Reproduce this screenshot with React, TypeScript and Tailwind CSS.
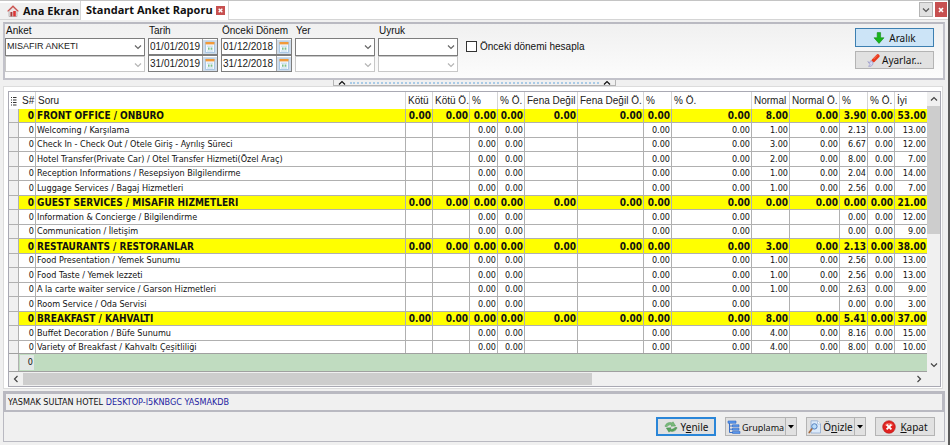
import { useState } from "react";
import type { ReactNode } from "react";
import clsx from "clsx";

type Column = { label: string; width: string };
type Row = { title: string; group?: boolean; values: string[] };

const columns: Column[] = [
  { label: "Kötü", width: "w-[27px]" },
  { label: "Kötü Ö.", width: "w-[37px]" },
  { label: "%", width: "w-[28px]" },
  { label: "% Ö.", width: "w-[27px]" },
  { label: "Fena Değil", width: "w-[53px]" },
  { label: "Fena Değil Ö.", width: "w-[66px]" },
  { label: "%", width: "w-[28px]" },
  { label: "% Ö.", width: "w-[80px]" },
  { label: "Normal", width: "w-[38px]" },
  { label: "Normal Ö.", width: "w-[50px]" },
  { label: "%", width: "w-[28px]" },
  { label: "% Ö.", width: "w-[27px]" },
  { label: "İyi", width: "w-[32px]" },
];

// only the last five columns differ between rows
const group = (title: string, normal: string, pct: string, good: string): Row => ({
  title,
  group: true,
  values: [...Array(8).fill("0.00"), normal, "0.00", pct, "0.00", good],
});

const item = (title: string, normal: string, pct: string, good: string): Row => ({
  title,
  values: [
    "", "", "0.00", "0.00", "", "", "0.00", "0.00",
    normal, normal ? "0.00" : "", pct, "0.00", good,
  ],
});

const rows: Row[] = [
  group("FRONT OFFICE / ONBURO", "8.00", "3.90", "53.00"),
  item("Welcoming / Karşılama", "1.00", "2.13", "13.00"),
  item("Check In - Check Out / Otele Giriş - Ayrılış Süreci", "3.00", "6.67", "12.00"),
  item("Hotel Transfer(Private Car) / Otel Transfer Hizmeti(Özel Araç)", "2.00", "8.00", "7.00"),
  item("Reception Informations / Resepsiyon Bilgilendirme", "1.00", "2.04", "14.00"),
  item("Luggage Services / Bagaj Hizmetleri", "1.00", "2.56", "7.00"),
  group("GUEST SERVICES / MISAFIR HIZMETLERI", "0.00", "0.00", "21.00"),
  item("Information & Concierge / Bilgilendirme", "", "0.00", "12.00"),
  item("Communication / İletişim", "", "0.00", "9.00"),
  group("RESTAURANTS / RESTORANLAR", "3.00", "2.13", "38.00"),
  item("Food Presentation / Yemek Sunumu", "1.00", "2.56", "13.00"),
  item("Food Taste / Yemek lezzeti", "1.00", "2.56", "13.00"),
  item("A la carte waiter service / Garson Hizmetleri", "1.00", "2.63", "9.00"),
  item("Room Service / Oda Servisi", "", "0.00", "3.00"),
  group("BREAKFAST / KAHVALTI", "8.00", "5.41", "37.00"),
  item("Buffet Decoration / Büfe Sunumu", "4.00", "8.16", "15.00"),
  item("Variety of Breakfast / Kahvaltı Çeşitliliği", "4.00", "8.00", "10.00"),
];

function Chevron({ className }: { className?: string }) {
  return (
    <svg viewBox="0 0 8 8" className={clsx("size-2 shrink-0", className)} fill="none" stroke="currentColor" strokeWidth="1.2">
      <path d="M1 2.5 4 5.5 7 2.5" />
    </svg>
  );
}

function HomeIcon() {
  return (
    <svg viewBox="0 0 12 12" className="size-3 shrink-0">
      <path d="M2 6v5.5h8V6L6 2.2z" fill="#efe3e3" stroke="#a9a3a3" strokeWidth=".7" />
      <path d="M.6 6.4 6 1.2l5.4 5.2" fill="none" stroke="#d0524e" strokeWidth="1.2" />
      <path d="M3.4 7h2v4.4h-2z" fill="#a33c3c" />
      <path d="M6.2 6h2.6v5.4H6.2z" fill="#d33" />
    </svg>
  );
}

function CalendarIcon() {
  return (
    <svg viewBox="0 0 14 14" className="size-[14px]">
      <path d="M0 0h14v14H0z" fill="#cfdcea" />
      <path d="M2.5 2h9v10.5h-9z" fill="#f4f9fd" stroke="#9dbfdf" strokeWidth=".8" />
      <path d="M2.5 2h9v2.4h-9z" fill="#f29a38" />
      <path d="M4 6.2h6M4 11h6" stroke="#b5d0e6" strokeWidth=".8" />
      <path d="M5 7.4h1.6v2.4H5zM7.6 7.4h1.8v2.4H7.6z" fill="#7fc08a" />
    </svg>
  );
}

function ArrowDownIcon() {
  return (
    <svg viewBox="0 0 12 12" className="size-3">
      <path d="M4.2.6h3.4v5.2H11L6 11.4 1 5.8h3.2z" fill="#17b51b" stroke="#128c16" strokeWidth=".6" />
    </svg>
  );
}

function ToolIcon() {
  return (
    <svg viewBox="0 0 13 13" className="size-[13px]">
      <path d="M6.4 6.4 10.8 2" stroke="#e8391c" strokeWidth="3.6" strokeLinecap="round" />
      <path d="M6.6 5 10.2 1.4" stroke="#ff8a6b" strokeWidth=".8" />
      <path d="M.8 7.6 2.8 8.8 3.4 6.8 5.6 7.6 6 10 4.2 12.2 1.6 12.4 3 10.4z" fill="#d5d5ee" stroke="#9a9ac8" strokeWidth=".7" />
    </svg>
  );
}

function RefreshIcon() {
  return (
    <svg viewBox="0 0 14 12" className="h-3 w-[14px]">
      <path d="M1 5.4C1.6 2.4 5 .8 8 2l1-1.2L11.6 5 7 5.2l.8-1.2C5.6 3.4 4 4 3.2 5.6z" fill="#79b87a" stroke="#4f9a55" strokeWidth=".5" />
      <path d="M13 6.6c-.6 3-4 4.6-7 3.4L5 11.2 2.4 7 7 6.8 6.2 8c2.2.6 3.8 0 4.600-1.400z" fill="#57a35c" stroke="#3f8746" strokeWidth=".5" />
    </svg>
  );
}

function GroupIcon() {
  return (
    <svg viewBox="0 0 14 14" className="size-[14px] shrink-0">
      <path d="M2.500 3v9.500H6M2.500 6H6M2.500 9.200H6" fill="none" stroke="#3b6fc4" />
      <path d="M1 1h8v2.200H1zM5.500 4.800H12v2H5.500zM5.500 8.200H12v2H5.500zM5.500 11.400H13v2H5.500z" fill="#5b9af0" stroke="#2c63bd" strokeWidth=".6" />
    </svg>
  );
}

function PreviewIcon() {
  return (
    <svg viewBox="0 0 14 14" className="size-[14px] shrink-0">
      <path d="M3 .8h6.500L12.500 4v9H3z" fill="#dceafa" stroke="#8fabd0" strokeWidth=".8" />
      <path d="M9.500.8V4h3" fill="#fff" stroke="#8fabd0" strokeWidth=".6" />
      <path d="M4.200 8.600 1.200 12.600" stroke="#a5683a" strokeWidth="1.600" strokeLinecap="round" />
      <circle cx="6.400" cy="6.400" r="2.700" fill="#b9dcfa" stroke="#5580bd" />
    </svg>
  );
}

function CloseIcon() {
  return (
    <svg viewBox="0 0 14 14" className="size-[14px]">
      <circle cx="7" cy="7" r="6.300" fill="#e0211f" stroke="#b31b1b" strokeWidth=".6" />
      <path d="M2.400 5.500a5 4 0 0 1 9.200 0z" fill="#f06a60" />
      <path d="m4.600 4.600 4.800 4.800M9.400 4.600 4.600 9.400" stroke="#fff" strokeWidth="1.900" />
    </svg>
  );
}

function CrossMark({ className }: { className: string }) {
  return (
    <svg viewBox="0 0 10 10" className={className} stroke="#fff" strokeWidth="1.600">
      <path d="m3 3 4 4M7 3 3 7" />
    </svg>
  );
}

function Combo({ label, value, disabled }: { label: string; value?: string; disabled?: boolean }) {
  return (
    <div className={clsx("relative border bg-white", disabled ? "h-4 border-[#c8c8c8] text-[#b5b5b5]" : "h-[18px] border-[#7d7d7d] text-[#666]")}>
      <select
        aria-label={label}
        disabled={disabled}
        defaultValue={value ?? ""}
        className="block h-full w-full appearance-none pl-px pr-3 text-[9px] text-[#1a1a1a] outline-none"
      >
        <option>{value ?? ""}</option>
      </select>
      <Chevron className="pointer-events-none absolute top-1 right-[2px]" />
    </div>
  );
}

function DateBox({ label, value }: { label: string; value: string }) {
  return (
    <div className="flex h-[17px] items-center border border-[#7d7d7d] bg-white">
      <input
        aria-label={label}
        defaultValue={value}
        className="h-full min-w-0 flex-1 pl-px text-[10px] text-[#1a1a1a] outline-none"
      />
      <button aria-label={`${label} seç`} className="flex h-full items-center border-l border-[#a0a0a0]">
        <CalendarIcon />
      </button>
    </div>
  );
}

function Field({ label, width, children }: { label: string; width: string; children: ReactNode }) {
  return (
    <div className={clsx("flex flex-col", width)}>
      <span className="h-[14px] pl-px text-[10px] leading-[14px] whitespace-nowrap">{label}</span>
      {children}
    </div>
  );
}

const buttonBase =
  "flex items-center justify-center font-['Noto_Sans',sans-serif] text-[10px] leading-none whitespace-nowrap";
const buttonPlain = "border border-[#b4b4b4] bg-[#e1e1e1]";

function SplitButton({ icon, children, width, menu }: { icon: ReactNode; children: ReactNode; width: string; menu: string }) {
  return (
    <div className={clsx("flex h-[19px]", width)}>
      <button className={clsx(buttonBase, buttonPlain, "min-w-0 flex-1 gap-px")}>
        {icon}
        <span>{children}</span>
      </button>
      <button aria-label={menu} className={clsx(buttonBase, buttonPlain, "-ml-px w-3")}>
        <svg viewBox="0 0 6 4" className="h-1 w-[6px]">
          <path d="M0 0h6L3 3.500z" />
        </svg>
      </button>
    </div>
  );
}

function TabBar() {
  return (
    <header className="flex h-5 items-stretch border-t border-[#c4c4c4] bg-white font-['Open_Sans',sans-serif] text-[11px] font-bold">
      <a href="#ana" className="mt-[2px] flex w-20 items-center gap-1 border-b border-[#d5d5d5] bg-[#f0f0f0] pl-[7px] whitespace-nowrap">
        <HomeIcon />
        Ana Ekran
      </a>
      <div className="flex w-[149px] items-center justify-between border-x border-[#d5d5d5] pr-[3px] pl-[5px] whitespace-nowrap">
        <a href="#rapor">Standart Anket Raporu</a>
        <button aria-label="Sekmeyi kapat" className="bg-[#c75050]">
          <CrossMark className="size-[9px]" />
        </button>
      </div>
      <div className="flex flex-1 items-start justify-end gap-[2px] border-b border-[#d5d5d5] pt-px pr-px">
        <button aria-label="Sekmeler" className="flex h-[15px] w-[14px] items-center justify-center border border-[#b4b4b4] bg-[#e1e1e1] text-[#555]">
          <Chevron />
        </button>
        <button aria-label="Kapat" className="flex h-[15px] w-3 items-center justify-center bg-[#c75050]">
          <CrossMark className="size-[10px]" />
        </button>
      </div>
    </header>
  );
}

function FilterPanel() {
  const [usePrevious, setUsePrevious] = useState(false);

  return (
    <section className="mt-[2px] mr-[3px] ml-[3px] flex h-[58px] items-start border-2 border-t-[#b9b9c1] border-[#c2c2ca] bg-linear-to-b from-[#f0f0f0] to-[#fcfcfc] pr-[9px]">
      <div className="flex gap-[3px]">
        <Field label="Anket" width="w-[140px]">
          <Combo label="Anket" value="MISAFIR ANKETI" />
          <Combo label="Anket 2" disabled />
        </Field>
        <Field label="Tarih" width="w-[70px]">
          <DateBox label="Tarih başlangıç" value="01/01/2019" />
          <DateBox label="Tarih bitiş" value="31/01/2019" />
        </Field>
        <Field label="Önceki Dönem" width="w-[71px]">
          <DateBox label="Önceki dönem başlangıç" value="01/12/2018" />
          <DateBox label="Önceki dönem bitiş" value="31/12/2018" />
        </Field>
        <Field label="Yer" width="w-[80px]">
          <Combo label="Yer" />
          <Combo label="Yer 2" disabled />
        </Field>
        <Field label="Uyruk" width="w-[80px]">
          <Combo label="Uyruk" />
          <Combo label="Uyruk 2" disabled />
        </Field>
      </div>
      <label className="mt-[15px] ml-2 flex items-center gap-[3px] text-[10px] whitespace-nowrap">
        <input
          type="checkbox"
          checked={usePrevious}
          onChange={(e) => setUsePrevious(e.target.checked)}
          className="size-[11px] appearance-none border border-[#333] bg-white checked:bg-[#333]"
        />
        Önceki dönemi hesapla
      </label>
      <div className="mt-1 ml-auto flex w-[79px] flex-col gap-1">
        <button className={clsx(buttonBase, "h-[19px] gap-1 border border-[#3c7fb1] bg-[#cce4f7]")}>
          <ArrowDownIcon />
          Aralık
        </button>
        <button className={clsx(buttonBase, buttonPlain, "h-[18px] gap-[2px]")}>
          <ToolIcon />
          Ayarlar...
        </button>
      </div>
    </section>
  );
}

function Splitter() {
  return (
    <button
      aria-label="Filtreyi gizle"
      className="mx-auto flex h-[6px] w-[283px] shrink-0 items-center gap-1 border border-t-0 border-[#b4b4b4] bg-[#f0f0f0] px-1"
    >
      <Chevron className="rotate-180" />
      <span className="flex-1 border-t-2 border-dotted border-[#a9cbe6]" />
      <Chevron className="rotate-180" />
    </button>
  );
}

const cell = "overflow-hidden border-r border-b border-[#b0b0b0] p-0 whitespace-nowrap";

function ReportTable() {
  return (
    <table className="w-full table-fixed border-separate border-spacing-0">
      <colgroup>
        <col className="w-[10px]" />
        <col className="w-[17px]" />
        <col />
        {columns.map((c, i) => (
          <col key={i} className={c.width} />
        ))}
      </colgroup>
      <thead className="text-[10px] text-[#222]">
        <tr className="h-[17px] text-left">
          <th className="p-0" aria-label="Menü">
            <svg viewBox="0 0 8 10" className="h-[10px] w-2" stroke="#333" strokeWidth="1.200">
              <path d="M2 1.500h1M4 1.500h3.500M2 4h1M4 4h3.500M2 6.500h1M4 6.500h3.500M2 9h1M4 9h3.500" />
            </svg>
          </th>
          <th className="border-r border-[#d5d5d5] p-0 pl-[3px] font-normal">S#</th>
          <th className="border-r border-[#d5d5d5] p-0 pl-[2px] font-normal">Soru</th>
          {columns.map((c, i) => (
            <th key={i} className="overflow-hidden border-r border-[#d5d5d5] p-0 pl-[2px] font-normal whitespace-nowrap last:border-r-0">
              {c.label}
            </th>
          ))}
        </tr>
      </thead>
      <tbody className="font-['DejaVu_Sans_Condensed','DejaVu_Sans',sans-serif] text-[9px] leading-[13px]">
        {rows.map((row) => (
          <tr
            key={row.title}
            className={clsx("h-[14px] even:h-[15px]", row.group && "bg-[#ffff00] text-[10px] font-bold")}
          >
            <td className="border-r border-b border-[#b0b0b0] bg-[#f0f0f0] p-0" />
            <td className={clsx(cell, "pr-px text-right")}>0</td>
            <td className={clsx(cell, "pl-px")}>{row.title}</td>
            {row.values.map((v, i) => (
              <td key={i} className={clsx(cell, "pr-px text-right last:border-r-0")}>
                {v}
              </td>
            ))}
          </tr>
        ))}
      </tbody>
    </table>
  );
}

function ReportGrid() {
  return (
    <main className="mr-[5px] ml-[3px] flex min-h-0 flex-1 flex-col border border-[#dcdcdc] bg-white px-1 pt-1 pr-px pb-px">
      <div className="flex min-h-0 flex-1 flex-col border border-[#a9a9b3]">
        <div className="flex min-h-0 flex-1">
          <div className="flex min-w-0 flex-1 flex-col">
            <div className="min-h-0 flex-1 overflow-hidden">
              <ReportTable />
            </div>
            <div className="flex h-[19px] shrink-0 border-y border-[#a0a0a0] bg-[#c0dcc0] font-['DejaVu_Sans_Condensed','DejaVu_Sans',sans-serif] text-[9px]">
              <div className="w-[10px] border-r border-[#b0b0b0] bg-[#f0f0f0]" />
              <div className="my-px ml-px flex w-[14px] items-center justify-end bg-[#e3e8e6] pr-px">0</div>
            </div>
          </div>
          <div className="flex w-[13px] flex-col items-center bg-[#f0f0f0] text-[#444]">
            <Chevron className="my-[3px] rotate-180" />
            <div className="h-[128px] w-full bg-[#cdcdcd]" />
            <Chevron className="mt-auto mb-[3px]" />
          </div>
        </div>
        <div className="flex h-[14px] items-center bg-[#f0f0f0] pr-[14px] text-[#444]">
          <Chevron className="mx-[3px] rotate-90" />
          <div className="h-3 w-[62%] bg-[#cdcdcd]" />
          <Chevron className="mr-[3px] ml-auto -rotate-90" />
        </div>
      </div>
    </main>
  );
}

function BottomBar() {
  return (
    <footer className="mt-[2px] mr-[3px] mb-[3px] ml-[3px] border border-[#b9b9c1]">
      <p className="h-5 border-2 border-[#b9b9c1] pl-[2px] font-['DejaVu_Sans_Condensed','DejaVu_Sans',sans-serif] text-[9px] leading-4">
        YASMAK SULTAN HOTEL <span className="text-[#2323a0]">DESKTOP-I5KNBGC YASMAKDB</span>
      </p>
      <div className="flex h-[29px] items-center justify-end gap-[9px] pr-[9px]">
        <button className={clsx(buttonBase, "h-[19px] w-[60px] gap-[3px] border-2 border-[#2a86d8] bg-[#e1e1e1]")}>
          <RefreshIcon />
          <span>Y<u>e</u>nile</span>
        </button>
        <SplitButton icon={<GroupIcon />} width="w-[72px]" menu="Gruplama seçenekleri">
          <span className="text-[9px]">Gruplama</span>
        </SplitButton>
        <SplitButton icon={<PreviewIcon />} width="w-[60px]" menu="Önizleme seçenekleri">
          Ö<u>n</u>izle
        </SplitButton>
        <button className={clsx(buttonBase, buttonPlain, "h-[19px] w-[60px] gap-1")}>
          <CloseIcon />
          <span><u>K</u>apat</span>
        </button>
      </div>
    </footer>
  );
}

export default function App() {
  return (
    <div className="flex h-screen flex-col overflow-hidden border-r-2 border-[#5a5a5a] bg-[#f0f0f0] font-['Liberation_Sans',Arial,sans-serif] text-[#111]">
      <TabBar />
      <FilterPanel />
      <Splitter />
      <ReportGrid />
      <BottomBar />
    </div>
  );
}
